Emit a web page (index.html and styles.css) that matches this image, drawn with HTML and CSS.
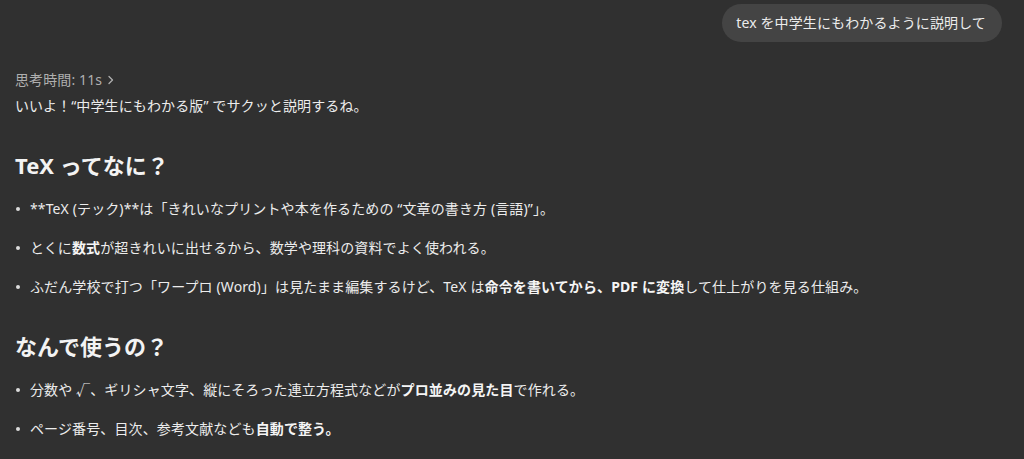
FILE: index.html
```html
<!DOCTYPE html>
<html lang="ja">
<head>
<meta charset="utf-8">
<link rel="stylesheet" href="styles.css">
</head>
<body>
<div class="chat">
  <div class="user-row">
    <div class="bubble">tex を中学生にもわかるように説明して</div>
  </div>
  <div class="answer">
    <div class="thinking">思考時間: 11s <svg class="chev" width="8" height="10" viewBox="0 0 8 10"><path d="M2 1.5 L5.5 5 L2 8.5" fill="none" stroke="currentColor" stroke-width="1.3" stroke-linecap="round" stroke-linejoin="round"/></svg></div>
    <p class="intro">いいよ！“中学生にもわかる版” でサクッと説明するね。</p>
    <h2 class="h">TeX ってなに？</h2>
    <ul class="list">
      <li><span class="dot"></span><span>**TeX (テック)**は「きれいなプリントや本を作るための “文章の書き方 (言語)”」。</span></li>
      <li><span class="dot"></span><span>とくに<b>数式</b>が超きれいに出せるから、数学や理科の資料でよく使われる。</span></li>
      <li><span class="dot"></span><span>ふだん学校で打つ「ワープロ (Word)」は見たまま編集するけど、TeX は<b>命令を書いてから、PDF に変換</b>して仕上がりを見る仕組み。</span></li>
    </ul>
    <h2 class="h">なんで使うの？</h2>
    <ul class="list">
      <li><span class="dot"></span><span>分数や √、ギリシャ文字、縦にそろった連立方程式などが<b>プロ並みの見た目</b>で作れる。</span></li>
      <li><span class="dot"></span><span>ページ番号、目次、参考文献なども<b>自動で整う。</b></span></li>
    </ul>
  </div>
</div>
</body>
</html>
```

FILE: styles.css
```css
* { box-sizing: border-box; }
html, body {
  margin: 0;
  padding: 0;
  background: #303030;
}
body {
  font-family: "Noto Sans", "Noto Sans CJK JP", sans-serif;
  color: #ececec;
  font-size: 14px;
  line-height: 20px;
  letter-spacing: 0.12px;
  overflow: hidden;
}
.chat {
  display: flex;
  flex-direction: column;
}
.user-row {
  display: flex;
  justify-content: flex-end;
  padding: 4px 22px 0 0;
}
.bubble {
  height: 38px;
  line-height: 38px;
  padding: 0 16px 0 14px;
  border-radius: 19px;
  background: #444444;
  color: #ececec;
  font-size: 14px;
}
.answer {
  padding: 28px 0 0 15px;
}
.thinking {
  color: #afafaf;
  display: flex;
  align-items: center;
  gap: 5px;
  height: 20px;
}
.chev { display: block; }
.intro {
  margin: 6px 0 0;
}
.h {
  margin: 34px 0 0;
  font-size: 22px;
  line-height: 30px;
  font-weight: 700;
  letter-spacing: 0;
  color: #f3f3f3;
}
.list {
  list-style: none;
  margin: 19px 0 0;
  padding: 0;
  display: flex;
  flex-direction: column;
  gap: 19px;
}
.list li {
  display: flex;
  align-items: center;
}
.dot {
  width: 4px;
  height: 4px;
  border-radius: 50%;
  background: #dcdcdc;
  margin: 0 10px 0 1px;
  flex: none;
}
b { font-weight: 700; color: #f5f5f5; }
```
